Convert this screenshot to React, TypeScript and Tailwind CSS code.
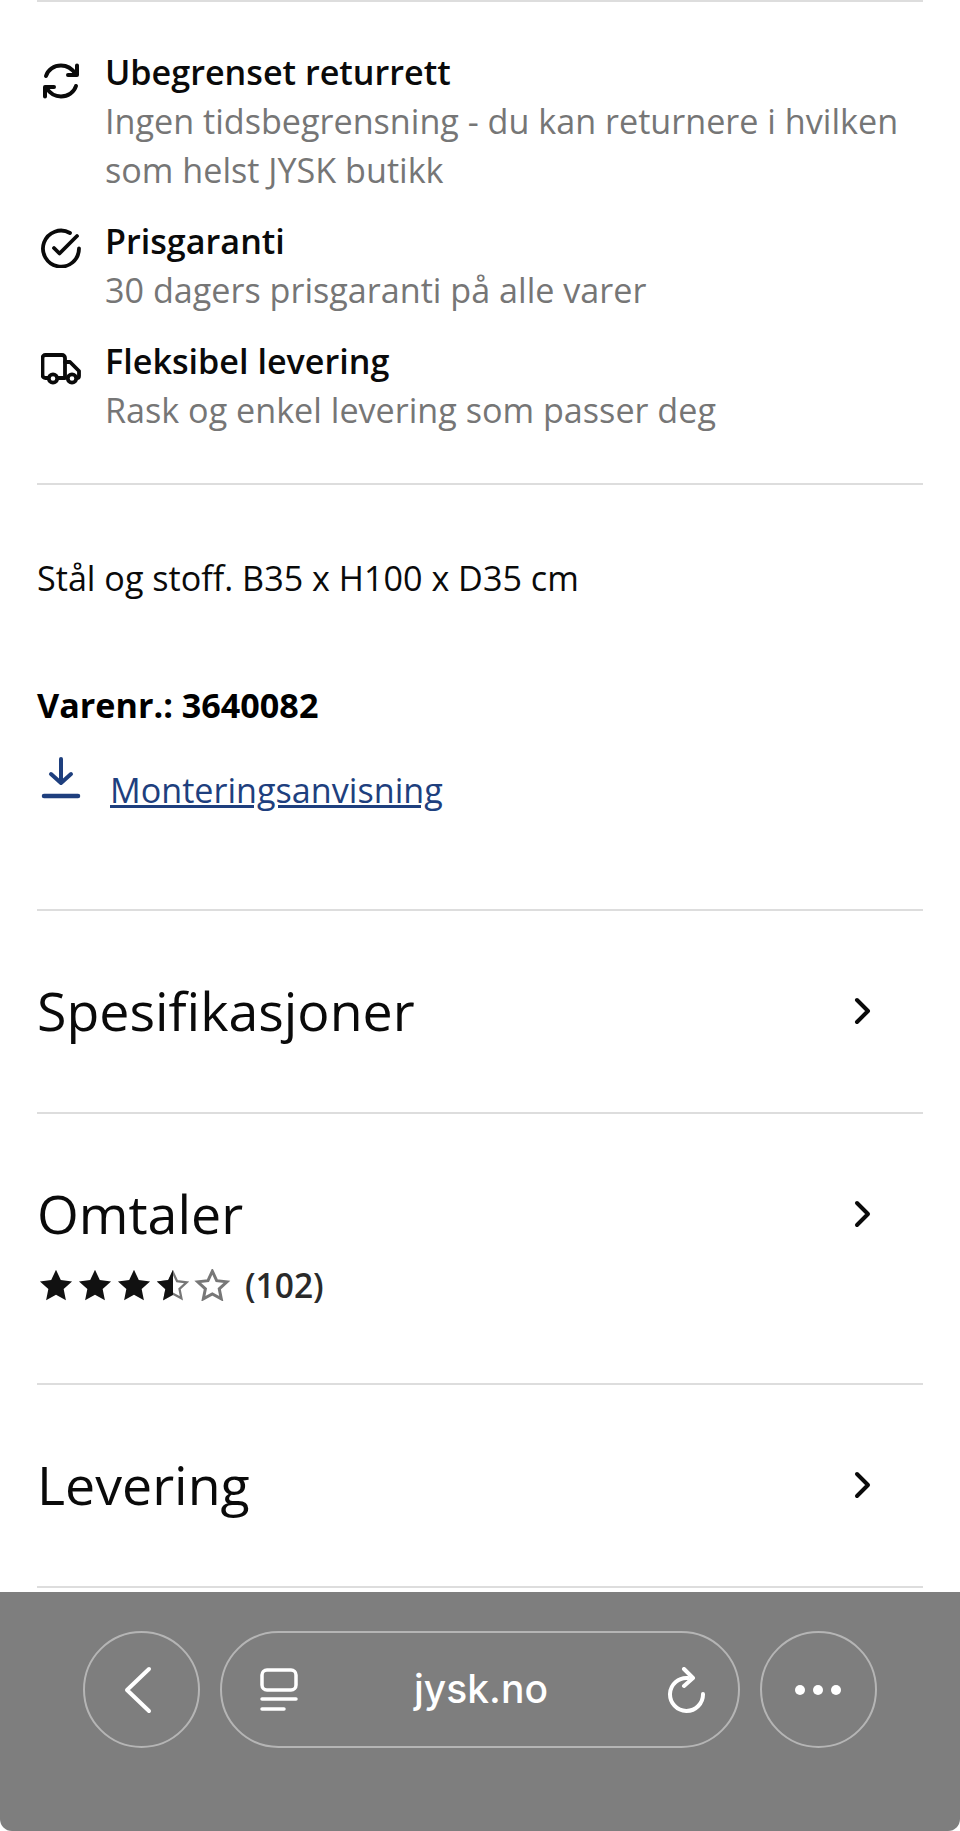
import type { ReactNode } from 'react'

const STAR = 'M12 1.5l3.2 6.9 7.5.9-5.6 5.1 1.5 7.4L12 18.2l-6.6 3.6 1.5-7.4-5.6-5.1 7.5-.9z'

function RefreshIcon() {
  return (
    <svg viewBox="0 0 40 40" className="h-10 w-10" fill="none" stroke="#0a0a0a" strokeWidth="4" strokeLinecap="round" strokeLinejoin="round">
      <path d="M5 15C7 8.500 13 4.500 20 4.500c6 0 11 3 14.500 8.500" />
      <path d="M36 4.500V14H27" />
      <path d="M35 25C33 31.500 27 35.500 20 35.500c-6 0-11-3-14.500-8.500" />
      <path d="M4 35.500V26H13" />
    </svg>
  )
}

function CheckIcon() {
  return (
    <svg viewBox="0 0 40 40" className="h-10 w-10" fill="none" stroke="#0a0a0a" strokeWidth="3.800" strokeLinecap="round" strokeLinejoin="round">
      <path d="M29 5A18 18 0 1 0 38 20.500" />
      <path d="M13 20l5.500 5.500L36 8" />
    </svg>
  )
}

function TruckIcon() {
  return (
    <svg viewBox="0 0 40 32" className="h-8 w-10" fill="none" stroke="#0a0a0a" strokeWidth="3.800" strokeLinecap="round" strokeLinejoin="round">
      <path d="M7 25H4.500A3 3 0 0 1 1.500 22V5A3 3 0 0 1 4.500 2H21a3 3 0 0 1 3 3V25H17" />
      <path d="M24 9h5l9 9v5a2 2 0 0 1-2 2" />
      <circle cx="12" cy="25.500" r="4.200" />
      <circle cx="31" cy="25.500" r="4.200" />
    </svg>
  )
}

function DownloadIcon() {
  return (
    <svg viewBox="0 0 40 44" className="h-11 w-10" fill="none" stroke="#1e3f7e" strokeWidth="4" strokeLinecap="round" strokeLinejoin="round">
      <path d="M20 3V26" />
      <path d="M10 18l10 9 10-9" />
      <path d="M3 40H37" strokeWidth="4.500" />
    </svg>
  )
}

function Chevron() {
  return (
    <svg viewBox="0 0 20 32" className="mr-[50px] h-8 w-5" fill="none" stroke="#0a0a0a" strokeWidth="4" strokeLinecap="round" strokeLinejoin="round">
      <path d="M4 5l11 11L4 27" />
    </svg>
  )
}

function Stars() {
  return (
    <svg viewBox="0 0 195 32" className="h-8 w-[195px]">
      <defs>
        <clipPath id="half-star">
          <rect x="0" y="0" width="12" height="24" />
        </clipPath>
      </defs>
      {[1, 40, 79].map((x) => (
        <path key={x} d={STAR} transform={`translate(${x} -1.5) scale(1.5)`} fill="#111" />
      ))}
      <g transform="translate(118 -1.500) scale(1.5)">
        <path d={STAR} fill="none" stroke="#777" strokeWidth="1.800" transform="translate(1.800 2) scale(.85)" />
        <path d={STAR} fill="#111" clipPath="url(#half-star)" />
      </g>
      <path d={STAR} transform="translate(159 0.200) scale(1.36)" fill="none" stroke="#777" strokeWidth="2.200" />
    </svg>
  )
}

function Perk({ icon, title, children, iconClass }: { icon: ReactNode; title: string; children: ReactNode; iconClass: string }) {
  return (
    <div className="flex">
      <div className={`w-[68px] shrink-0 pl-1 ${iconClass}`}>{icon}</div>
      <div className="min-w-0">
        <p className="text-[34.15px] leading-[49px] font-semibold text-[#0a0a0a]">{title}</p>
        <p className="text-[34.15px] leading-[49px] text-[#767676]">{children}</p>
      </div>
    </div>
  )
}

function Section({ title, children }: { title: string; children?: ReactNode }) {
  return (
    <div className="border-b-2 border-[#dddddd]">
      <div className="flex items-center justify-between pt-[66px]">
        <h2 className="text-[53.7px] leading-[68px] font-normal text-[#0a0a0a]">{title}</h2>
        <Chevron />
      </div>
      {children ?? <div className="h-[67px]" />}
    </div>
  )
}

export default function App() {
  return (
    <div className="flex h-[1831px] w-[960px] flex-col overflow-hidden bg-white font-['Open_Sans',sans-serif]">
      <main className="h-[1590px] shrink-0 px-[37px]">
        <div className="flex flex-col gap-[22px] border-t-2 border-b-2 border-t-[#dddddd] border-b-[#dddddd] pt-[45px] pb-[49px]">
          <Perk icon={<RefreshIcon />} title="Ubegrenset returrett" iconClass="pt-[14px]">
            Ingen tidsbegrensning - du kan returnere i hvilken som helst JYSK butikk
          </Perk>
          <Perk icon={<CheckIcon />} title="Prisgaranti" iconClass="pt-[12px]">
            30 dagers prisgaranti på alle varer
          </Perk>
          <Perk icon={<TruckIcon />} title="Fleksibel levering" iconClass="pt-[17px]">
            Rask og enkel levering som passer deg
          </Perk>
        </div>

        <div className="border-b-2 border-[#dddddd] pb-[95px]">
          <p className="mt-[68px] text-[34.15px] leading-[49px] text-[#0a0a0a]">Stål og stoff. B35 x H100 x D35 cm</p>
          <p className="mt-[78px] text-[34.15px] leading-[49px] font-bold text-black">Varenr.: 3640082</p>
          <div className="mt-[27px] flex items-start">
            <div className="w-[73px] shrink-0 pl-1">
              <DownloadIcon />
            </div>
            <a href="#" className="pt-[9px] text-[34.15px] leading-[49px] text-[#1e3f7e] underline">
              Monteringsanvisning
            </a>
          </div>
        </div>

        <Section title="Spesifikasjoner" />
        <Section title="Omtaler">
          <div className="flex items-center gap-[13px] pt-[14px] pb-[75px]">
            <Stars />
            <span className="text-[33.5px] leading-[46px] font-semibold text-[#2a2a2a]">(102)</span>
          </div>
        </Section>
        <Section title="Levering" />
      </main>

      <nav className="flex-1 rounded-b-[12px] border-t-2 border-white bg-[#7e7e7e] pt-[39px]">
        <div className="flex justify-center gap-5">
          <button className="flex h-[117px] w-[117px] items-center justify-center rounded-full border-2 border-[#b5b5b5]">
            <svg viewBox="0 0 30 48" className="mr-[8px] h-12 w-[30px]" fill="none" stroke="white" strokeWidth="4" strokeLinecap="round" strokeLinejoin="round">
              <path d="M26 3L4 24l22 21" />
            </svg>
          </button>
          <div className="flex h-[117px] w-[520px] items-center justify-between rounded-full border-2 border-[#b5b5b5] pr-[32px] pl-[38px]">
            <svg viewBox="0 0 38 44" className="h-11 w-[38px]" fill="none" stroke="white" strokeWidth="3.500" strokeLinecap="round" strokeLinejoin="round">
              <rect x="2" y="2" width="34" height="20" rx="5" />
              <path d="M2 31H36" />
              <path d="M2 41H24" />
            </svg>
            <span className="mr-[2px] font-['Inter',sans-serif] text-[39px] font-medium text-white">jysk.no</span>
            <svg viewBox="0 0 40 46" className="h-[46px] w-10" fill="none" stroke="white" strokeWidth="4" strokeLinecap="round" strokeLinejoin="round">
              <path d="M22 11A16.500 16.500 0 1 0 37 27" />
              <path d="M18 2l9 9-9 8" />
            </svg>
          </div>
          <button className="flex h-[117px] w-[117px] items-center justify-center gap-2 rounded-full border-2 border-[#b5b5b5] pr-[2px]">
            <span className="h-[10px] w-[10px] rounded-full bg-white" />
            <span className="h-[10px] w-[10px] rounded-full bg-white" />
            <span className="h-[10px] w-[10px] rounded-full bg-white" />
          </button>
        </div>
      </nav>
    </div>
  )
}
